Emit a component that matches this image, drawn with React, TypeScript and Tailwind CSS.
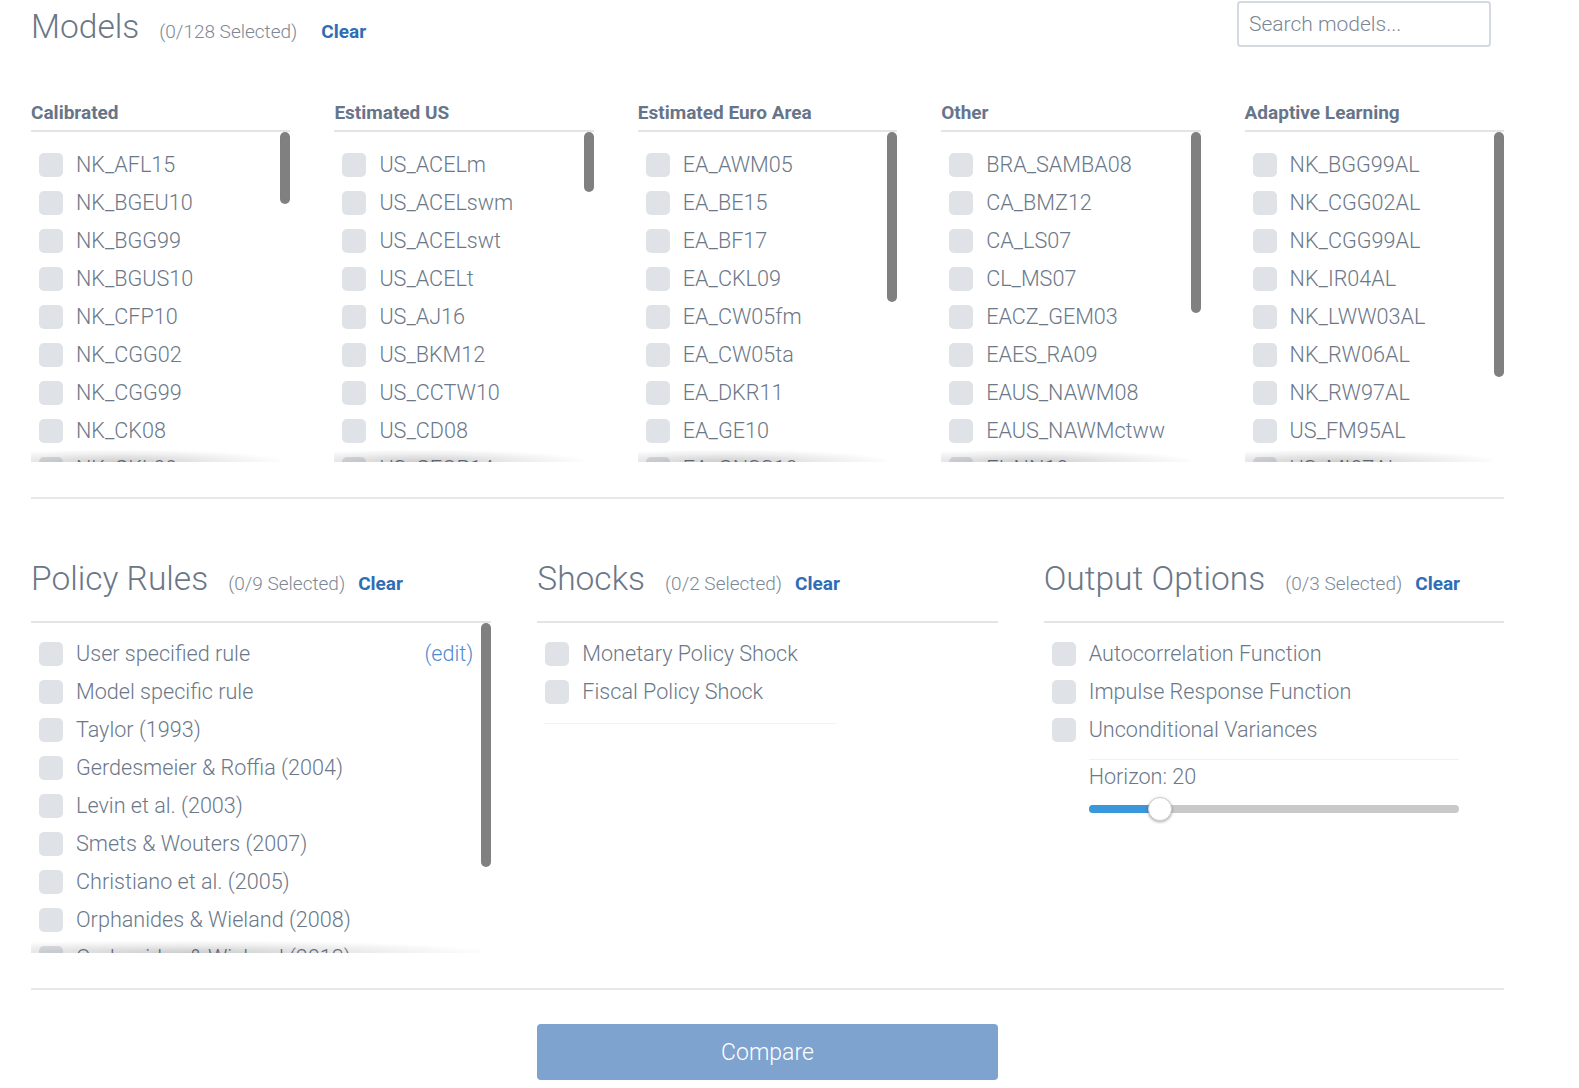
import React from "react";

const TEXT = "text-[#6b7889]";

type Col = { title: string; items: string[]; bar: number };

const modelCols: Col[] = [
  {
    title: "Calibrated",
    bar: 72,
    items: ["NK_AFL15", "NK_BGEU10", "NK_BGG99", "NK_BGUS10", "NK_CFP10", "NK_CGG02", "NK_CGG99", "NK_CK08", "NK_CKL09", "NK_CKLlm09"],
  },
  {
    title: "Estimated US",
    bar: 60,
    items: ["US_ACELm", "US_ACELswm", "US_ACELswt", "US_ACELt", "US_AJ16", "US_BKM12", "US_CCTW10", "US_CD08", "US_CFOP14", "US_CMR08"],
  },
  {
    title: "Estimated Euro Area",
    bar: 170,
    items: ["EA_AWM05", "EA_BE15", "EA_BF17", "EA_CKL09", "EA_CW05fm", "EA_CW05ta", "EA_DKR11", "EA_GE10", "EA_GNSS10", "EA_QUEST3"],
  },
  {
    title: "Other",
    bar: 181,
    items: ["BRA_SAMBA08", "CA_BMZ12", "CA_LS07", "CL_MS07", "EACZ_GEM03", "EAES_RA09", "EAUS_NAWM08", "EAUS_NAWMctww", "EI_NN10", "G2_SIGMA08"],
  },
  {
    title: "Adaptive Learning",
    bar: 245,
    items: ["NK_BGG99AL", "NK_CGG02AL", "NK_CGG99AL", "NK_IR04AL", "NK_LWW03AL", "NK_RW06AL", "NK_RW97AL", "US_FM95AL", "US_MI07AL", "US_SW07AL"],
  },
];

const policyRules = [
  "User specified rule",
  "Model specific rule",
  "Taylor (1993)",
  "Gerdesmeier & Roffia (2004)",
  "Levin et al. (2003)",
  "Smets & Wouters (2007)",
  "Christiano et al. (2005)",
  "Orphanides & Wieland (2008)",
  "Orphanides & Wieland (2013)",
];

function Row({ label, edit }: { label: string; edit?: boolean }) {
  return (
    <div className="flex h-[38px] items-center pl-2 pr-[18px]">
      <span className="h-6 w-6 shrink-0 rounded-[5px] bg-[#dfe3e8]" />
      <span className={`ml-[13px] whitespace-nowrap text-[21.6px] font-light leading-none ${TEXT}`}>{label}</span>
      {edit && <span className="ml-auto text-[21.6px] font-light leading-none text-[#4f8bd0]">(edit)</span>}
    </div>
  );
}

function ScrollShadow() {
  return (
    <div className="pointer-events-none absolute bottom-0 left-0 right-[10px] h-[12px] bg-[radial-gradient(ellipse_at_35%_100%,rgba(0,0,0,0.2),rgba(0,0,0,0.07)_45%,transparent_75%)]" />
  );
}

function SectionHeader({ title, count, clearGap }: { title: string; count: string; clearGap: string }) {
  return (
    <div className="flex items-baseline">
      <span className="text-[33.5px] font-light leading-[34px] text-[#6b7787]">{title}</span>
      <span className="ml-[20px] text-[19px] font-light leading-none text-[#7d8896]">{count}</span>
      <span className={`${clearGap} text-[19px] font-bold leading-none text-[#2f6db5]`}>Clear</span>
    </div>
  );
}

export default function App() {
  return (
    <div className="h-[1088px] w-[1579px] overflow-hidden bg-white pl-[31px] font-['Roboto',sans-serif]">
      <div className="w-[1473px]">
        {/* Header */}
        <div className="flex h-[47px] items-start justify-between">
          <div className="pt-[10px]">
            <SectionHeader title="Models" count="(0/128 Selected)" clearGap="ml-[24px]" />
          </div>
          <input
            placeholder="Search models..."
            className="mr-[13px] mt-px h-[46px] w-[254px] rounded-[4px] border-2 border-[#d5dae0] px-[10px] text-[21px] font-light text-[#6b7889] outline-none placeholder:text-[#7b8794]"
          />
        </div>

        {/* Model columns */}
        <div className="mt-[56px] grid grid-cols-5 gap-x-[44px]">
          {modelCols.map((c) => (
            <div key={c.title}>
              <div className="border-b-2 border-[#e4e4e4] pb-[8px] text-[19px] font-bold leading-[19px] text-[#66758a]">
                {c.title}
              </div>
              <div className="relative h-[330px] overflow-hidden pt-[14px]">
                {c.items.map((it) => (
                  <Row key={it} label={it} />
                ))}
                <div className="absolute right-0 top-0 w-[10px] rounded-full bg-[#808080]" style={{ height: c.bar }} />
                <ScrollShadow />
              </div>
            </div>
          ))}
        </div>

        <div className="mt-[35px] h-[2px] bg-[#e8e8e8]" />

        {/* Second section */}
        <div className="mt-[63px] grid grid-cols-3 gap-x-[46px]">
          <div>
            <div className="border-b-2 border-[#e4e4e4] pb-[25px]">
              <SectionHeader title="Policy Rules" count="(0/9 Selected)" clearGap="ml-[13px]" />
            </div>
            <div className="relative h-[330px] overflow-hidden pt-[12px]">
              {policyRules.map((p, i) => (
                <Row key={p} label={p} edit={i === 0} />
              ))}
              <div className="absolute right-0 top-0 h-[244px] w-[10px] rounded-full bg-[#808080]" />
              <ScrollShadow />
            </div>
          </div>

          <div>
            <div className="border-b-2 border-[#e4e4e4] pb-[25px]">
              <SectionHeader title="Shocks" count="(0/2 Selected)" clearGap="ml-[13px]" />
            </div>
            <div className="pt-[12px]">
              <Row label="Monetary Policy Shock" />
              <Row label="Fiscal Policy Shock" />
              <div className="ml-[7px] mt-[12px] h-px w-[292px] bg-[#f3f3f3]" />
            </div>
          </div>

          <div>
            <div className="border-b-2 border-[#e4e4e4] pb-[25px]">
              <SectionHeader title="Output Options" count="(0/3 Selected)" clearGap="ml-[13px]" />
            </div>
            <div className="pt-[12px]">
              <Row label="Autocorrelation Function" />
              <Row label="Impulse Response Function" />
              <Row label="Unconditional Variances" />
              <div className="ml-[45px] mt-[10px] h-px w-[370px] bg-[#f1f1f1]" />
              <div className={`ml-[45px] mt-[6px] text-[21.6px] font-light leading-[22px] ${TEXT}`}>Horizon: 20</div>
              <div className="relative ml-[45px] mt-[17px] h-2 w-[370px] rounded-full bg-[#c9c9c9]">
                <div className="absolute left-0 top-0 h-2 w-[72px] rounded-full bg-[#3a97dc]" />
                <div className="absolute left-[59px] top-[-8px] h-6 w-6 rounded-full border border-[#d0d0d0] bg-white shadow-[0_1px_3px_rgba(0,0,0,0.35)]" />
              </div>
            </div>
          </div>
        </div>

        <div className="mt-[35px] h-[2px] bg-[#e8e8e8]" />

        <div className="mt-[34px] grid grid-cols-3 gap-x-[46px]">
          <div className="col-start-2 flex h-[56px] items-center justify-center rounded-[4px] bg-[#7ea3cf] pt-[3px] text-[23px] font-light text-white">
            Compare
          </div>
        </div>
      </div>
    </div>
  );
}
